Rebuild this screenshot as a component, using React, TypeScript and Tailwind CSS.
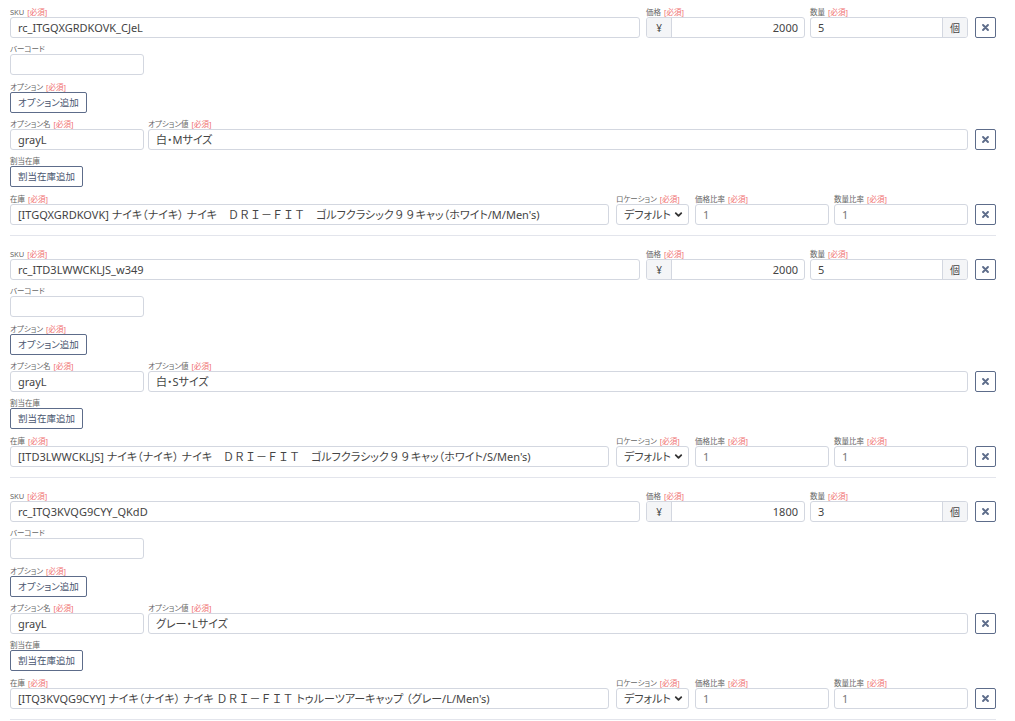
import { ChevronDown } from "lucide-react";

type Variant = {
  sku: string;
  price: string;
  qty: string;
  optName: string;
  optValue: string;
  stock: string;
};

const variants: Variant[] = [
  {
    sku: "rc_ITGQXGRDKOVK_CJeL",
    price: "2000",
    qty: "5",
    optName: "grayL",
    optValue: "白・Mサイズ",
    stock: "[ITGQXGRDKOVK] ナイキ（ナイキ） ナイキ　ＤＲＩ－ＦＩＴ　ゴルフクラシック９９キャッ（ホワイト/M/Men's)",
  },
  {
    sku: "rc_ITD3LWWCKLJS_w349",
    price: "2000",
    qty: "5",
    optName: "grayL",
    optValue: "白・Sサイズ",
    stock: "[ITD3LWWCKLJS] ナイキ（ナイキ） ナイキ　ＤＲＩ－ＦＩＴ　ゴルフクラシック９９キャッ（ホワイト/S/Men's)",
  },
  {
    sku: "rc_ITQ3KVQG9CYY_QKdD",
    price: "1800",
    qty: "3",
    optName: "grayL",
    optValue: "グレー・Lサイズ",
    stock: "[ITQ3KVQG9CYY] ナイキ（ナイキ） ナイキ ＤＲＩ－ＦＩＴ トゥルーツアーキャップ （グレー/L/Men's)",
  },
];

// full-width latin letters and digits keep their wide spacing in the original
function StockText({ text }: { text: string }) {
  const parts = text.split(/([Ａ-Ｚ０-９－　]+)/);
  return (
    <span>
      {parts.map((p, i) =>
        i % 2 === 1 ? (
          <span key={i} className="[font-feature-settings:normal]">
            {p}
          </span>
        ) : (
          <span key={i}>{p}</span>
        )
      )}
    </span>
  );
}

function Label({ text, required }: { text: string; required?: boolean }) {
  return (
    <div className="h-[11px] flex items-end pb-[1px] leading-none text-[7.5px] text-[#666] whitespace-nowrap">
      {text}
      {required && <span className="ml-[3px] text-[#f07070]">[必須]</span>}
    </div>
  );
}

const box =
  "h-[21px] border border-[#d3d7e0] rounded-[3px] bg-white text-[11px] leading-none text-[#444] px-[7px] flex items-center whitespace-nowrap overflow-hidden";

function RemoveButton() {
  return (
    <button className="w-[21px] h-[21px] shrink-0 border border-[#5d6c8a] rounded-[2px] bg-white flex items-center justify-center">
      <svg width="7" height="7" viewBox="0 0 8 8">
        <path d="M1.2 1.2 L6.8 6.8 M6.8 1.2 L1.2 6.8" stroke="#5d6c8a" strokeWidth="2.2" strokeLinecap="round" />
      </svg>
    </button>
  );
}

function AddButton({ text }: { text: string }) {
  return (
    <button className="flex items-center h-[21px] px-[7px] border border-[#5d6c8a] rounded-[2px] bg-white text-[9.5px] text-[#4a5670] leading-none">
      {text}
    </button>
  );
}

function VariantBlock({ v }: { v: Variant }) {
  return (
    <div className="flex flex-col">
      {/* SKU / price / qty */}
      <div className="flex items-end mt-[5px]">
        <div className="flex-1">
          <Label text="SKU" required />
          <div className={box}>{v.sku}</div>
        </div>
        <div className="w-[159px] ml-[6px]">
          <Label text="価格" required />
          <div className="flex h-[21px] border border-[#d3d7e0] rounded-[3px] overflow-hidden text-[11px] leading-none text-[#444]">
            <div className="w-[25px] bg-[#f4f5f7] border-r border-[#d3d7e0] flex items-center justify-center text-[10px]">¥</div>
            <div className="flex-1 flex items-center justify-end px-[6px]">{v.price}</div>
          </div>
        </div>
        <div className="w-[158px] ml-[5px]">
          <Label text="数量" required />
          <div className="flex h-[21px] border border-[#d3d7e0] rounded-[3px] overflow-hidden text-[11px] leading-none text-[#444]">
            <div className="flex-1 flex items-center px-[7px]">{v.qty}</div>
            <div className="w-[25px] bg-[#f4f5f7] border-l border-[#d3d7e0] flex items-center justify-center text-[10px]">個</div>
          </div>
        </div>
        <div className="ml-[7px] flex">
          <RemoveButton />
        </div>
      </div>

      {/* barcode */}
      <div className="mt-[5px]">
        <Label text="バーコード" />
        <div className={`${box} w-[134px]`}></div>
      </div>

      {/* options */}
      <div className="mt-[6px]">
        <Label text="オプション" required />
        <div className="flex">
          <AddButton text="オプション追加" />
        </div>
      </div>

      <div className="flex items-end mt-[5px]">
        <div className="w-[134px]">
          <Label text="オプション名" required />
          <div className={box}>{v.optName}</div>
        </div>
        <div className="flex-1 ml-[4px]">
          <Label text="オプション値" required />
          <div className={box}>{v.optValue}</div>
        </div>
        <div className="ml-[7px] flex">
          <RemoveButton />
        </div>
      </div>

      {/* stock allocation */}
      <div className="mt-[5px]">
        <Label text="割当在庫" />
        <div className="flex">
          <AddButton text="割当在庫追加" />
        </div>
      </div>

      <div className="flex items-end mt-[6px]">
        <div className="flex-1 min-w-0">
          <Label text="在庫" required />
          <div className={box}>
            <StockText text={v.stock} />
          </div>
        </div>
        <div className="w-[73px] ml-[7px]">
          <Label text="ロケーション" required />
          <div className="h-[21px] border border-[#d3d7e0] rounded-[3px] bg-white flex items-center justify-between pl-[7px] pr-[4px] text-[11px] leading-none text-[#444] whitespace-nowrap overflow-hidden">
            <span>デフォルト</span>
            <ChevronDown size={11} strokeWidth={4} className="text-[#333] shrink-0" />
          </div>
        </div>
        <div className="w-[134px] ml-[6px]">
          <Label text="価格比率" required />
          <div className={`${box} text-[#777]`}>1</div>
        </div>
        <div className="w-[134px] ml-[5px]">
          <Label text="数量比率" required />
          <div className={`${box} text-[#777]`}>1</div>
        </div>
        <div className="ml-[7px] flex">
          <RemoveButton />
        </div>
      </div>

      <div className="mt-[10px] mb-[7px] h-px bg-[#e3e5ec]" />
    </div>
  );
}

export default function App() {
  return (
    <div
      className="w-[1015px] min-h-[721px] bg-white pl-[10px] pr-[19px] pt-[1px] flex flex-col [font-feature-settings:'palt']"
      style={{ fontFamily: '"Noto Sans", "Noto Sans CJK JP", sans-serif' }}
    >
      {variants.map((v) => (
        <VariantBlock key={v.sku} v={v} />
      ))}
    </div>
  );
}
